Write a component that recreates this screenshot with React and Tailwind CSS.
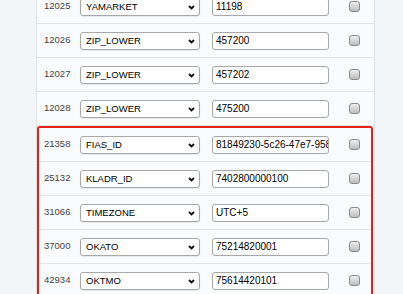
import React from 'react'

const topRows = [
    { id: '12025', field: 'YAMARKET', value: '11198' },
    { id: '12026', field: 'ZIP_LOWER', value: '457200' },
    { id: '12027', field: 'ZIP_LOWER', value: '457202' },
    { id: '12028', field: 'ZIP_LOWER', value: '475200' },
]

const markedRows = [
    { id: '21358', field: 'FIAS_ID', value: '81849230-5c26-47e7-9581-f3b6' },
    { id: '25132', field: 'KLADR_ID', value: '7402800000100' },
    { id: '31066', field: 'TIMEZONE', value: 'UTC+5' },
    { id: '37000', field: 'OKATO', value: '75214820001' },
    { id: '42934', field: 'OKTMO', value: '75614420101' },
]

const Row = ({ item, inner }) => {
    return (
        <div className={`flex items-center h-[34px] border-b border-[#e0e5e9] ${inner ? 'pl-[5px]' : 'pl-[7px]'}`}>
            <div className='w-[36px] text-[9.5px] text-[#444]'>{item.id}</div>
            <div className='relative w-[120px] h-[18px] bg-white border border-[#a8a8a8] rounded-[3px] flex items-center pl-[5px] shadow-[0_1px_1px_rgba(0,0,0,0.08)]'>
                <span className='text-[9.5px] text-black leading-none'>{item.field}</span>
                <svg className='absolute right-[4px] top-[6px]' width="7" height="5" viewBox="0 0 7 5">
                    <path d="M1 1l2.5 2.5L6 1" fill="none" stroke="#111" strokeWidth="1.9" />
                </svg>
            </div>
            <div className='ml-[12px] w-[117px] h-[18px] bg-white border border-[#a8a8a8] rounded-[3px] flex items-center pl-[3px] overflow-hidden'>
                <span className='text-[10px] text-black leading-none whitespace-nowrap'>{item.value}</span>
            </div>
            <div className='ml-[20px] w-[11px] h-[11px] rounded-[3px] border border-[#8a8a8a] bg-gradient-to-b from-[#eeeeee] to-[#bdbdbd]'></div>
        </div>
    )
}

const App = () => {
    return (
        <div className='h-[294px] w-[403px] overflow-hidden bg-[#f3f6f8] pl-[36px]' style={{ fontFamily: '"Liberation Sans", Arial, sans-serif' }}>
            <div className='w-[339px] -mt-[10px] bg-[#f9fbfc] border-x border-[#dde2e6] pb-10'>
                {topRows.map((item) => (
                    <Row key={item.id} item={item} />
                ))}
                <div className='mr-px border-2 border-[#e3211b] rounded-[3px]'>
                    {markedRows.map((item) => (
                        <Row key={item.id} item={item} inner />
                    ))}
                </div>
            </div>
        </div>
    )
}

export default App
